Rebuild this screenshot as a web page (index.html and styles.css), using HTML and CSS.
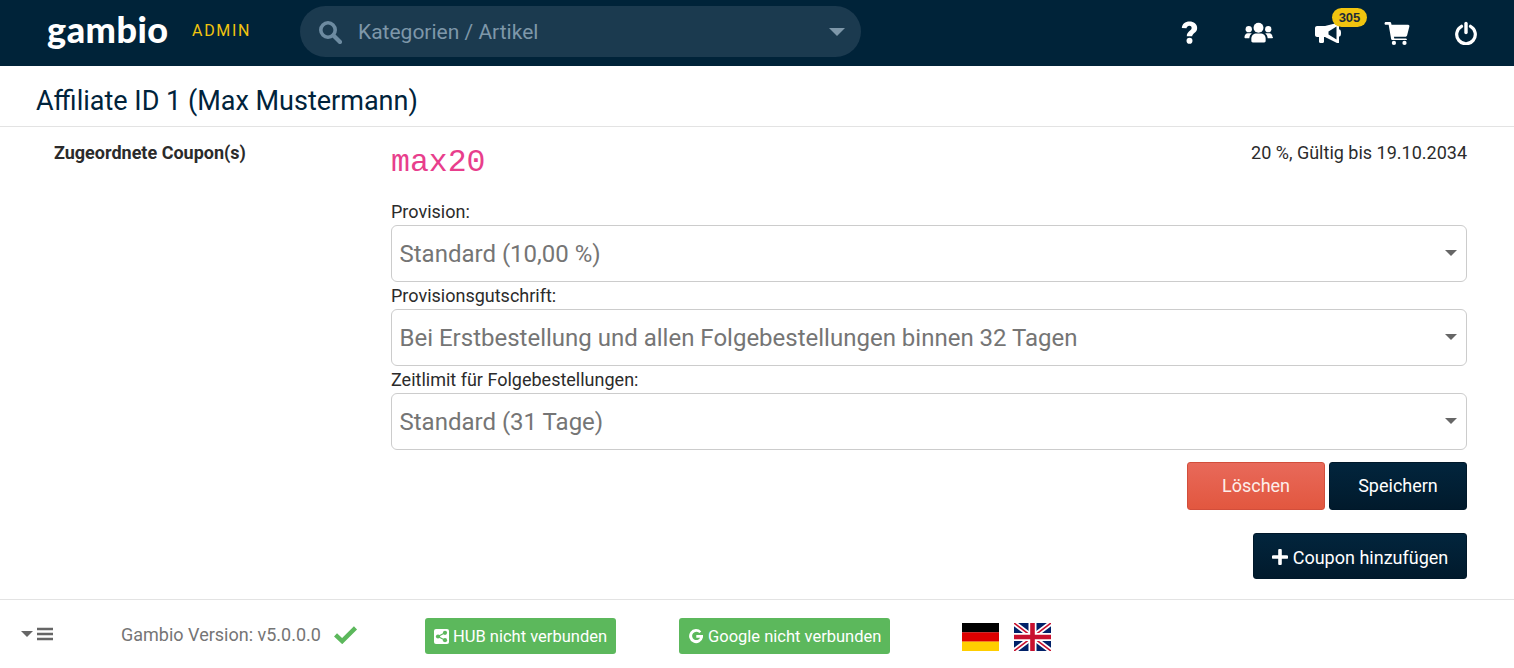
FILE: index.html
```html
<!DOCTYPE html>
<html lang="de">
<head>
<meta charset="utf-8">
<title>Affiliate ID 1</title>
<link rel="stylesheet" href="styles.css">
</head>
<body>
<header class="topbar">
  <div class="logo">gambio</div>
  <div class="admin">ADMIN</div>
  <div class="search">
    <svg class="search-icon" viewBox="0 0 24 24"><circle cx="10" cy="10" r="7.2" fill="none" stroke="currentColor" stroke-width="3.6"/><path d="M15.5 15.5L22 22" stroke="currentColor" stroke-width="4.2" stroke-linecap="round"/></svg>
    <span class="search-text">Kategorien / Artikel</span>
    <span class="search-caret"></span>
  </div>
  <nav class="top-icons">
    <span class="top-icon"><svg viewBox="0 0 20 26" width="17" height="23" preserveAspectRatio="none"><path d="M1 8C1 3.500 5 .5 10 .5c5 0 9 2.800 9 7.300 0 5.700-5.800 5.700-5.800 9.500H6.800C6.800 11.500 12.500 11.500 12.500 8c0-1.700-1.100-2.600-2.700-2.600-1.700 0-2.800 1-3.400 2.800z" fill="#fff"/><circle cx="10" cy="22.300" r="3.500" fill="#fff"/></svg></span>
    <span class="top-icon"><svg viewBox="0 0 30 22" width="29" height="21"><circle cx="15" cy="6" r="5.200" fill="#fff"/><path d="M7.500 20v-2.500C7.500 14 10 12 13 12h4c3 0 5.500 2 5.500 5.500V20c0 .8-.7 1.500-1.500 1.500H9c-.8 0-1.500-.7-1.500-1.500z" fill="#fff"/><circle cx="4.800" cy="7.500" r="3.300" fill="#fff"/><circle cx="25.200" cy="7.500" r="3.300" fill="#fff"/><path d="M.3 16c0-2.500 1.500-4.300 3.500-4.300h3c.4 0 .8.100 1.100.3-1.600 1.200-2.400 3-2.500 5H1.500C.8 17 .3 16.600.3 16zM29.700 16c0-2.500-1.500-4.300-3.500-4.300h-3c-.4 0-.8.100-1.100.3 1.600 1.200 2.400 3 2.500 5h4.900c.7 0 1.200-.4 1.200-1z" fill="#fff"/></svg></span>
    <span class="top-icon"><svg viewBox="0 0 26 20" width="26" height="20"><path d="M0 5C0 3.800 1 3 2 3h8L22 0h2v20h-2l-12-6H9v4.800c0 .7-.5 1.200-1.200 1.200H5.200c-.7 0-1.200-.5-1.200-1.200V14H2c-1 0-2-.8-2-2z" fill="#fff"/><path d="M13.500 8.500L21.500 3.500V16.500L13.500 11.500z" fill="#002339"/><path d="M24 6.500h.6c.8 0 1.400 1.400 1.400 3.500s-.6 3.500-1.400 3.500H24z" fill="#fff"/></svg><span class="badge">305</span></span>
    <span class="top-icon"><svg viewBox="0 0 26 25" width="26" height="24"><path d="M0 2.500C0 1.700.6 1 1.400 1h4.100c.7 0 1.300.5 1.400 1.200l.4 1.800H24.600c.9 0 1.500.9 1.300 1.700l-2.400 9.500c-.2.700-.8 1.100-1.400 1.100H9.800l.4 2H22c.8 0 1.400.7 1.400 1.500H8.300c-.7 0-1.300-.5-1.400-1.100L4.300 3.900H1.400C.6 3.900 0 3.300 0 2.500z" fill="#fff"/><circle cx="9.800" cy="22.800" r="2.200" fill="#fff"/><circle cx="20.800" cy="22.800" r="2.200" fill="#fff"/></svg></span>
    <span class="top-icon"><svg viewBox="0 0 24 24" width="24" height="24"><path d="M7.500 5.300a9.300 9.300 0 1 0 9 0" fill="none" stroke="#fff" stroke-width="3.200" stroke-linecap="round"/><path d="M12 2.500v9" stroke="#fff" stroke-width="3.400" stroke-linecap="round"/></svg></span>
  </nav>
</header>

<div class="title-bar"><h1 class="page-title">Affiliate ID 1 (Max Mustermann)</h1></div>

<main class="content">
  <div class="label-col">Zugeordnete Coupon(s)</div>
  <div class="form-col">
    <div class="coupon-row">
      <code class="coupon-code">max20</code>
      <span class="coupon-info">20 %, Gültig bis 19.10.2034</span>
    </div>
    <div class="field">
      <label class="field-label">Provision:</label>
      <div class="select">Standard (10,00 %)<span class="select-caret"></span></div>
    </div>
    <div class="field">
      <label class="field-label">Provisionsgutschrift:</label>
      <div class="select">Bei Erstbestellung und allen Folgebestellungen binnen 32 Tagen<span class="select-caret"></span></div>
    </div>
    <div class="field">
      <label class="field-label">Zeitlimit für Folgebestellungen:</label>
      <div class="select">Standard (31 Tage)<span class="select-caret"></span></div>
    </div>
    <div class="actions">
      <button class="btn btn-red">Löschen</button>
      <button class="btn btn-dark">Speichern</button>
    </div>
    <div class="add-row">
      <button class="btn btn-dark btn-add"><svg viewBox="0 0 16 16" width="16" height="16"><path d="M8 1.500v13M1.500 8h13" stroke="#fff" stroke-width="3.600" stroke-linecap="round"/></svg>Coupon hinzufügen</button>
    </div>
  </div>
</main>

<footer class="footer">
  <div class="menu-toggle">
    <span class="menu-caret"></span>
    <svg viewBox="0 0 16 14" width="16" height="14"><path d="M0 2h16M0 7h16M0 12h16" stroke="#666" stroke-width="2.400"/></svg>
  </div>
  <span class="version">Gambio Version: v5.0.0.0</span>
  <svg class="check" viewBox="0 0 26 20" width="25" height="19"><path d="M2.500 10.500L9.500 17 23.500 3" fill="none" stroke="#5cb85c" stroke-width="4.600"/></svg>
  <a class="pill pill-hub"><svg viewBox="0 0 15 15" width="15" height="15"><rect width="15" height="15" rx="2" fill="#fff"/><circle cx="4" cy="7.500" r="2.100" fill="#5cb85c"/><circle cx="11" cy="3.800" r="2.100" fill="#5cb85c"/><circle cx="11" cy="11.200" r="2.100" fill="#5cb85c"/><path d="M4 7.500L11 3.800M4 7.500l7 3.700" stroke="#5cb85c" stroke-width="1.200"/></svg>HUB nicht verbunden</a>
  <a class="pill pill-google"><svg viewBox="0 0 16 16" width="16" height="16"><path d="M13.300 3.400A7 7 0 1 0 15 9.300V7H8.300v2.700h3.800A4.200 4.200 0 1 1 11.400 5z" fill="#fff"/></svg>Google nicht verbunden</a>
  <div class="flags">
    <svg viewBox="0 0 37 28" width="37" height="28"><rect width="37" height="9.400" fill="#000"/><rect y="9.300" width="37" height="9.400" fill="#d00"/><rect y="18.600" width="37" height="9.400" fill="#ffce00"/></svg>
    <svg viewBox="0 0 37 28" width="37" height="28"><rect width="37" height="28" fill="#012169"/><path d="M0 0L37 28M37 0L0 28" stroke="#fff" stroke-width="5"/><path d="M0 0L37 28M37 0L0 28" stroke="#c8102e" stroke-width="1.600"/><path d="M18.500 0v28M0 14h37" stroke="#fff" stroke-width="8"/><path d="M18.500 0v28M0 14h37" stroke="#c8102e" stroke-width="4.600"/></svg>
  </div>
</footer>
</body>
</html>
```

FILE: styles.css
```css
* { box-sizing: border-box; }
html, body { height: 100%; }
body {
  margin: 0;
  display: flex;
  flex-direction: column;
  height: 668px;
  overflow: hidden;
  background: #fff;
  color: #2b2b2b;
  font-family: Roboto, "Liberation Sans", sans-serif;
  font-size: 18px;
}
.topbar {
  height: 66px;
  flex: none;
  display: flex;
  align-items: center;
  background: #002339;
  padding-left: 47px;
}
.logo {
  width: 145px;
  color: #fff;
  font-family: Lato, "Open Sans", sans-serif;
  font-weight: 900;
  font-size: 36px;
  letter-spacing: 0.5px;
  line-height: 1;
  margin-top: -8px;
}
.admin {
  width: 108px;
  color: #f1c40f;
  font-size: 16px;
  letter-spacing: 1.7px;
  margin-top: -5px;
}
.search {
  width: 561px;
  height: 51px;
  margin-top: -3px;
  border-radius: 26px;
  background: #1b3a4f;
  display: flex;
  align-items: center;
  padding: 0 16px 0 18px;
}
.search-icon { width: 24px; height: 24px; color: #6d8ba1; flex: none; }
.search-text { margin-left: 16px; color: #7e97a9; font-size: 21px; flex: 1; }
.search-caret {
  width: 0; height: 0;
  border-left: 8px solid transparent;
  border-right: 8px solid transparent;
  border-top: 8px solid #7e97a9;
}
.top-icons {
  margin-left: auto;
  display: flex;
  align-items: center;
  padding-right: 14px;
  margin-top: -1px;
}
.top-icon {
  position: relative;
  width: 69px;
  height: 26px;
  display: flex;
  align-items: center;
  justify-content: center;
}
.badge {
  position: absolute;
  left: 39px;
  top: -12px;
  width: 35px;
  height: 19px;
  border-radius: 10px;
  background: #f1c40f;
  color: #1f2d38;
  font-family: "Liberation Sans", sans-serif;
  font-weight: 700;
  font-size: 13px;
  line-height: 19px;
  text-align: center;
}
.title-bar {
  height: 61px;
  flex: none;
  display: flex;
  align-items: center;
  padding: 10px 0 0 36px;
  border-bottom: 1px solid #e3e3e3;
}
.page-title {
  margin: 0;
  font-weight: 400;
  font-size: 27px;
  color: #00233b;
}
.content {
  flex: 1;
  display: flex;
  padding: 0 47px 0 54px;
}
.label-col {
  width: 337px;
  flex: none;
  padding-top: 16px;
  font-weight: 700;
  line-height: 19px;
}
.form-col { flex: 1; min-width: 0; }
.coupon-row {
  display: flex;
  justify-content: space-between;
  align-items: flex-start;
  padding-top: 18px;
  height: 71px;
}
.coupon-code {
  font-family: "Liberation Mono", monospace;
  font-size: 31.5px;
  line-height: 36px;
  color: #e83e8c;
}
.coupon-info { line-height: 19px; margin-top: -2px; }
.field-label { display: block; height: 27px; line-height: 27px; }
.select {
  position: relative;
  height: 57px;
  border: 1px solid #ccc;
  border-radius: 6px;
  padding-left: 7.500px;
  color: #757575;
  font-size: 24px;
  line-height: 56px;
}
.select-caret {
  position: absolute;
  right: 9px;
  top: 24px;
  width: 0; height: 0;
  border-left: 6px solid transparent;
  border-right: 6px solid transparent;
  border-top: 6px solid #666;
}
.actions {
  display: flex;
  justify-content: flex-end;
  gap: 4px;
  margin-top: 12px;
}
.btn {
  height: 48px;
  width: 138px;
  border-radius: 3px;
  border: 1px solid transparent;
  color: #fff;
  font-family: Roboto, sans-serif;
  font-size: 18px;
  padding: 0 0 2px;
}
.btn-red { background: linear-gradient(#e8695a, #e2573f); border-color: #d24e3b; color: #fdeeea; }
.btn-dark { background: linear-gradient(#02253d, #011a2c); border-color: #00182a; }
.add-row { display: flex; justify-content: flex-end; margin-top: 23px; }
.btn-add {
  width: 214px;
  height: 46px;
  padding: 2px 0 0;
  display: flex;
  align-items: center;
  justify-content: center;
  gap: 5px;
}
.footer {
  height: 69px;
  flex: none;
  border-top: 1px solid #e3e3e3;
  display: flex;
  align-items: center;
  padding-left: 21px;
  color: #757575;
}
.menu-toggle { width: 100px; display: flex; align-items: center; gap: 4px; color: #666; }
.menu-caret {
  width: 0; height: 0;
  border-left: 6px solid transparent;
  border-right: 6px solid transparent;
  border-top: 6px solid #666;
}
.version { width: 212px; font-size: 18px; }
.check { flex: none; }
.pill {
  height: 36px;
  display: flex;
  align-items: center;
  gap: 4px;
  border-radius: 3px;
  background: #5cb85c;
  color: #fff;
  font-size: 16.500px;
  margin-top: 4px;
}
.pill-hub { width: 191px; margin-left: 67px; padding-left: 9px; }
.pill-google { width: 211px; margin-left: 63px; padding-left: 9px; }
.flags { margin: 6px 0 0 72px; display: flex; gap: 15px; }
```
